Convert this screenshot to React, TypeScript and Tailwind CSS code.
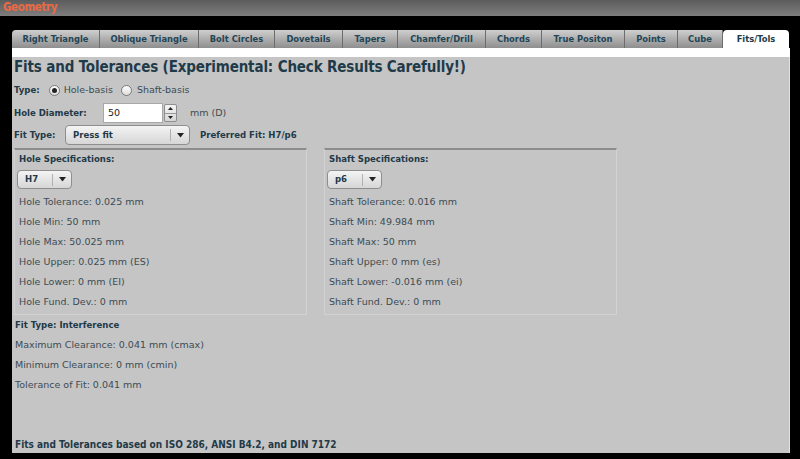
import React from "react";

const COND = { fontFamily: '"DejaVu Sans Condensed", "DejaVu Sans", sans-serif', fontStretch: "condensed" as const };

const tabs: [string, number][] = [
  ["Right Triangle", 88],
  ["Oblique Triangle", 99],
  ["Bolt Circles", 76],
  ["Dovetails", 68],
  ["Tapers", 55],
  ["Chamfer/Drill", 88],
  ["Chords", 56],
  ["True Positon", 83],
  ["Points", 53],
  ["Cube", 45],
];

function Caret() {
  return (
    <svg width="7" height="5" viewBox="0 0 7 5">
      <path d="M0 0 L7 0 L3.5 4.5 Z" fill="#222" />
    </svg>
  );
}

function B({ children, className = "" }: { children: React.ReactNode; className?: string }) {
  return (
    <span style={COND} className={"text-[9.5px] font-bold text-[#1f3a48] " + className}>
      {children}
    </span>
  );
}

function SmallSelect({ value }: { value: string }) {
  return (
    <div className="flex h-[19px] w-[55px] items-center rounded-[4px] border border-[#8e8e8e] bg-gradient-to-b from-[#f4f4f4] to-[#d6d6d6]">
      <B className="flex-1 pl-[7px]">{value}</B>
      <span className="h-[12px] w-px bg-[#b0b0b0]" />
      <span className="flex w-[18px] justify-center">
        <Caret />
      </span>
    </div>
  );
}

function Spec({ title, sel, lines }: { title: string; sel: string; lines: string[] }) {
  return (
    <div className="flex w-[293px] flex-col border-t-2 border-t-[#8c8c8c] border-x border-b border-x-[#d2d2d2] border-b-[#d2d2d2] px-[2px] pb-[2px]">
      <div className="h-[16px] pl-[2px] leading-[13px]">
        <B>{title}</B>
      </div>
      <div className="mt-[4px] h-[22px]">
        <SmallSelect value={sel} />
      </div>
      {lines.map((l) => (
        <div key={l} className="h-[20px] pl-[2px] text-[9.5px] leading-[20px] text-[#3c4c54]">
          {l}
        </div>
      ))}
    </div>
  );
}

export default function App() {
  return (
    <div
      className="flex h-[459px] w-[800px] flex-col bg-black"
      style={{ fontFamily: '"DejaVu Sans", Verdana, sans-serif' }}
    >
      <div className="h-[16px] shrink-0 bg-gradient-to-b from-[#5c5c5c] to-[#7e7e7e] pl-[3px] text-[11.5px] leading-[15px]">
        <span style={COND} className="font-bold tracking-[-0.4px] text-[#ea6a44]">Geometry</span>
      </div>
      <div className="flex flex-1 flex-col pl-[12px] pr-[10px] pt-[14px] pb-[6px]">
        <div className="flex h-[18px] shrink-0 items-stretch">
          {tabs.map(([t, w]) => (
            <div
              key={t}
              style={{ width: w, ...COND }}
              className="flex items-center justify-center border-r border-[#6c6c6c] bg-gradient-to-b from-[#cfcfcf] to-[#8e8e8e] text-[9.3px] font-bold text-[#234556] first:rounded-tl-[4px]"
            >
              {t}
            </div>
          ))}
          <div style={COND} className="flex w-[66px] items-center justify-center rounded-t-[4px] bg-white text-[9.3px] font-bold text-[#1f3a48]">
            Fits/Tols
          </div>
        </div>
        <div className="flex flex-1 flex-col bg-white pt-[9px]">
          <div className="flex flex-1 flex-col border-r border-[#e2e2e2] bg-[#c5c5c5] pl-[2px] pt-[1px]">
            <div style={COND} className="text-[15px] font-bold leading-[19px] tracking-[-0.15px] text-[#1f3a48]">
              Fits and Tolerances (Experimental: Check Results Carefully!)
            </div>
            <div className="mt-[5px] flex h-[17px] items-center text-[9.5px]">
              <B>Type:</B>
              <span className="ml-[9px] flex h-[11px] w-[11px] items-center justify-center rounded-full border border-[#7a7a7a] bg-gradient-to-b from-[#fff] to-[#ddd]">
                <span className="h-[5px] w-[5px] rounded-full bg-[#222]" />
              </span>
              <span className="ml-[4px] text-[#3c4c54]">Hole-basis</span>
              <span className="ml-[8px] h-[11px] w-[11px] rounded-full border border-[#7a7a7a] bg-gradient-to-b from-[#fff] to-[#ddd]" />
              <span className="ml-[5px] text-[#3c4c54]">Shaft-basis</span>
            </div>
            <div className="mt-[4px] flex h-[20px] items-center text-[9.5px]">
              <B className="w-[89px] shrink-0">Hole Diameter:</B>
              <div className="flex h-[20px] w-[60px] shrink-0 items-center border border-[#a8a8a8] bg-white pl-[4px] text-[#222]">50</div>
              <div className="ml-[1px] flex h-[18px] w-[13px] flex-col rounded-[2px] border border-[#8e8e8e] bg-gradient-to-b from-[#f4f4f4] to-[#d6d6d6]">
                <div className="flex flex-1 items-center justify-center border-b border-[#9a9a9a]">
                  <svg width="5" height="3" viewBox="0 0 5 3"><path d="M0 3 L5 3 L2.5 0 Z" fill="#222" /></svg>
                </div>
                <div className="flex flex-1 items-center justify-center">
                  <svg width="5" height="3" viewBox="0 0 5 3"><path d="M0 0 L5 0 L2.5 3 Z" fill="#222" /></svg>
                </div>
              </div>
              <span className="ml-[13px] text-[#3c4c54]">mm (D)</span>
            </div>
            <div className="mt-[2px] flex h-[20px] items-center">
              <B className="w-[51px] shrink-0">Fit Type:</B>
              <div className="flex h-[20px] w-[125px] items-center rounded-[4px] border border-[#8e8e8e] bg-gradient-to-b from-[#f4f4f4] to-[#d6d6d6]">
                <B className="flex-1 pl-[7px]">Press fit</B>
                <span className="h-[12px] w-px bg-[#b0b0b0]" />
                <span className="flex w-[18px] justify-center"><Caret /></span>
              </div>
              <B className="ml-[10px]">Preferred Fit: H7/p6</B>
            </div>
            <div className="mt-[3px] flex gap-[17px]">
              <Spec
                title="Hole Specifications:"
                sel="H7"
                lines={[
                  "Hole Tolerance: 0.025 mm",
                  "Hole Min: 50 mm",
                  "Hole Max: 50.025 mm",
                  "Hole Upper: 0.025 mm (ES)",
                  "Hole Lower: 0 mm (EI)",
                  "Hole Fund. Dev.: 0 mm",
                ]}
              />
              <Spec
                title="Shaft Specifications:"
                sel="p6"
                lines={[
                  "Shaft Tolerance: 0.016 mm",
                  "Shaft Min: 49.984 mm",
                  "Shaft Max: 50 mm",
                  "Shaft Upper: 0 mm (es)",
                  "Shaft Lower: -0.016 mm (ei)",
                  "Shaft Fund. Dev.: 0 mm",
                ]}
              />
            </div>
            <div className="pl-[1px] text-[9.5px]">
              <div className="h-[20px] leading-[20px]"><B>Fit Type: Interference</B></div>
              <div className="h-[20px] leading-[20px] text-[#3c4c54]">Maximum Clearance: 0.041 mm (cmax)</div>
              <div className="h-[20px] leading-[20px] text-[#3c4c54]">Minimum Clearance: 0 mm (cmin)</div>
              <div className="h-[20px] leading-[20px] text-[#3c4c54]">Tolerance of Fit: 0.041 mm</div>
            </div>
            <div className="mt-auto pl-[1px] leading-[16px]">
              <B className="text-[10px]">Fits and Tolerances based on ISO 286, ANSI B4.2, and DIN 7172</B>
            </div>
          </div>
        </div>
      </div>
    </div>
  );
}
